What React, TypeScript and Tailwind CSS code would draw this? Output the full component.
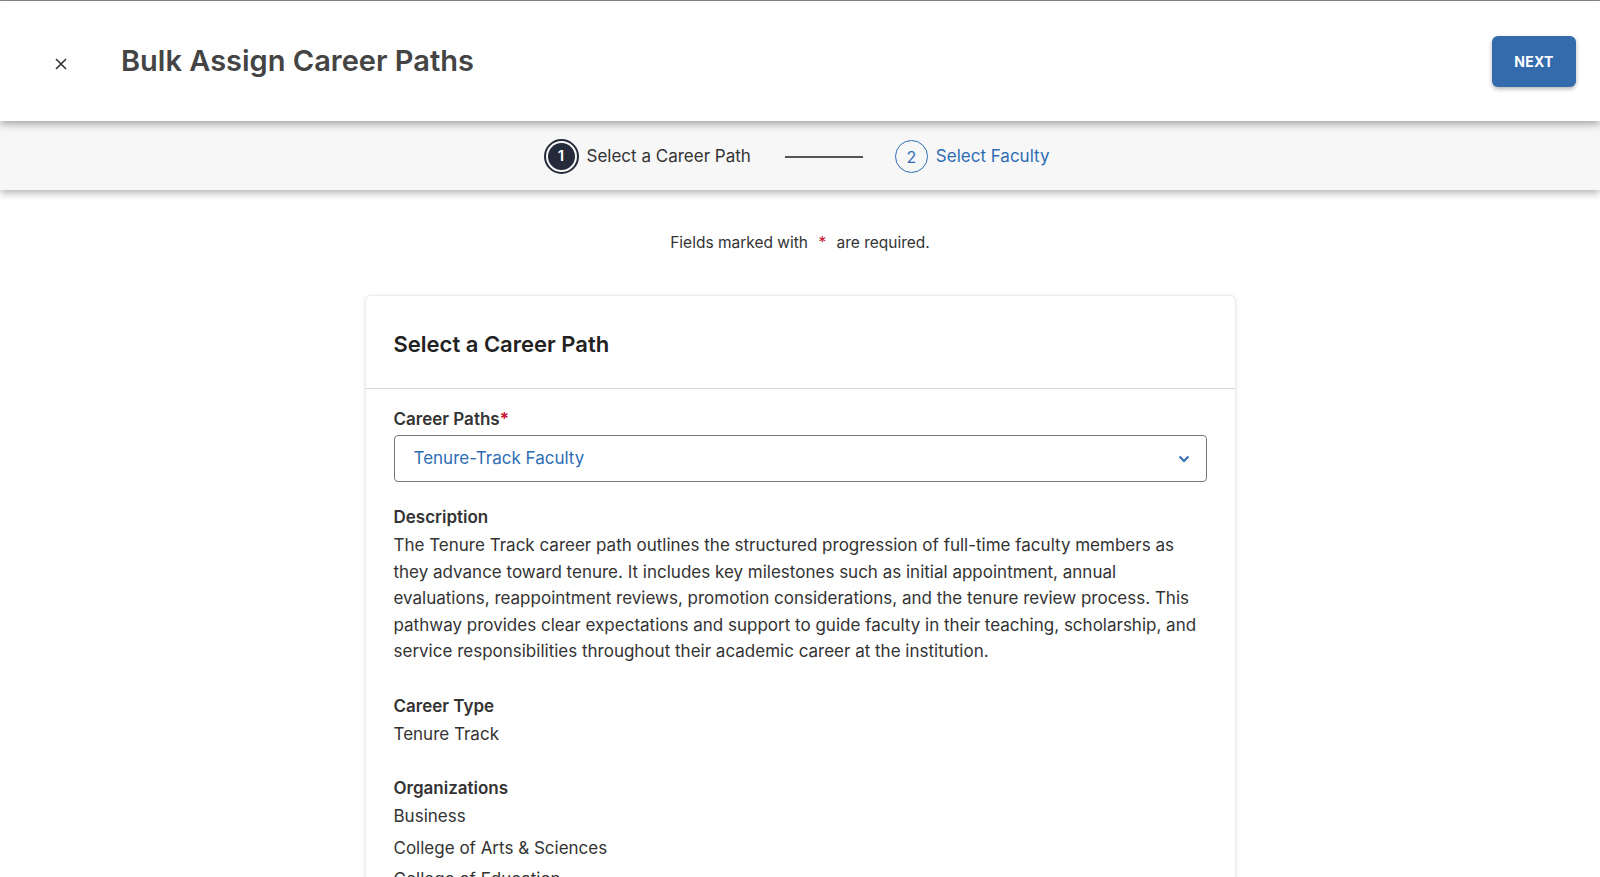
import React from "react";

const font = { fontFamily: "Inter, 'Noto Sans', sans-serif" };

function Section({ label, children, className = "" }: { label: string; children: React.ReactNode; className?: string }) {
  return (
    <div className={className}>
      <div className="text-[17px] leading-6 font-semibold text-[#333] mb-[3px]">{label}</div>
      {children}
    </div>
  );
}

export default function App() {
  return (
    <div style={font} className="w-[1600px] h-[877px] overflow-hidden bg-white relative text-[#333]">
      <div className="h-px bg-[#8a8a8a]" />
      {/* Header */}
      <div className="relative z-20 h-[120px] bg-white flex items-center shadow-[0_3px_8px_rgba(0,0,0,0.35)]">
        <button className="ml-[54px] w-[13px] h-[13px] mt-[6px] flex items-center justify-center text-[#333]">
          <svg width="12" height="12" viewBox="0 0 12 12" fill="none" stroke="currentColor" strokeWidth="1.6">
            <path d="M1 1 L11 11 M11 1 L1 11" />
          </svg>
        </button>
        <h1 className="ml-[54px] text-[29px] font-semibold text-[#444]">Bulk Assign Career Paths</h1>
        <div className="flex-1" />
        <button className="mr-[24px] w-[84px] h-[51px] rounded-[6px] bg-[#336bad] text-white text-[14px] font-bold tracking-[0.3px] shadow-[0_2px_4px_rgba(0,0,0,0.3)]">
          NEXT
        </button>
      </div>
      {/* Stepper */}
      <div className="relative z-10 h-[69px] bg-[#f7f7f7] flex items-center justify-center shadow-[0_3px_8px_rgba(0,0,0,0.3)]">
        <div className="flex items-center ml-[-7px] mt-[2px]">
          <div className="w-[35px] h-[35px] rounded-full border-2 border-[#252a3a] flex items-center justify-center">
            <div className="w-[27px] h-[27px] rounded-full bg-[#252a3a] text-white text-[15px] font-semibold flex items-center justify-center">1</div>
          </div>
          <span className="ml-[8px] text-[17px] text-[#333]">Select a Career Path</span>
          <div className="ml-[34px] w-[78px] h-[2px] bg-[#555]" />
          <div className="ml-[32px] w-[33px] h-[33px] rounded-full border border-[#2e6db4] text-[#2e6db4] text-[16px] flex items-center justify-center">2</div>
          <span className="ml-[8px] text-[17px] text-[#2e6db4]">Select Faculty</span>
        </div>
      </div>
      {/* Body */}
      <div className="flex flex-col items-center">
        <p className="mt-[42px] text-[15.5px] leading-[22px] text-[#333]">
          Fields marked with <span className="text-[#c8102e] mx-[6px]">*</span> are required.
        </p>
        <div className="mt-[41px] w-[871px] bg-white rounded-[6px] border border-[#ececec] shadow-[0_1px_4px_rgba(0,0,0,0.1)]">
          <div className="h-[93px] border-b border-[#d8d8d8] flex items-center px-[28px] pt-[4px]">
            <h2 className="text-[22px] font-semibold text-[#222]">Select a Career Path</h2>
          </div>
          <div className="px-[28px] pt-[18px] pb-10">
            <div className="text-[17px] leading-6 font-semibold text-[#333] mb-[4px]">
              Career Paths<span className="text-[#c8102e]">*</span>
            </div>
            <div className="h-[47px] border border-[#777] rounded-[4px] flex items-center pl-[19px] pr-[16px]">
              <span className="text-[17px] text-[#2e6db4]">Tenure-Track Faculty</span>
              <div className="flex-1" />
              <svg width="12" height="8" viewBox="0 0 12 8" fill="none" stroke="#2e6db4" strokeWidth="2">
                <path d="M1.5 1.5 L6 6 L10.5 1.5" />
              </svg>
            </div>
            <Section label="Description" className="mt-[23px]">
              <p className="text-[17px] leading-[26.5px] text-[#333]">
                The Tenure Track career path outlines the structured progression of full-time faculty members as they advance toward tenure. It includes key milestones such as initial appointment, annual evaluations, reappointment reviews, promotion considerations, and the tenure review process. This pathway provides clear expectations and support to guide faculty in their teaching, scholarship, and service responsibilities throughout their academic career at the institution.
              </p>
            </Section>
            <Section label="Career Type" className="mt-[29px]">
              <p className="text-[17px] leading-[26.5px]">Tenure Track</p>
            </Section>
            <Section label="Organizations" className="mt-[29px]">
              <div className="flex flex-col gap-[5px] text-[17px] leading-[26.5px]">
                <span>Business</span>
                <span>College of Arts &amp; Sciences</span>
                <span>College of Education</span>
                <span>College of Engineering</span>
              </div>
            </Section>
          </div>
        </div>
      </div>
    </div>
  );
}
